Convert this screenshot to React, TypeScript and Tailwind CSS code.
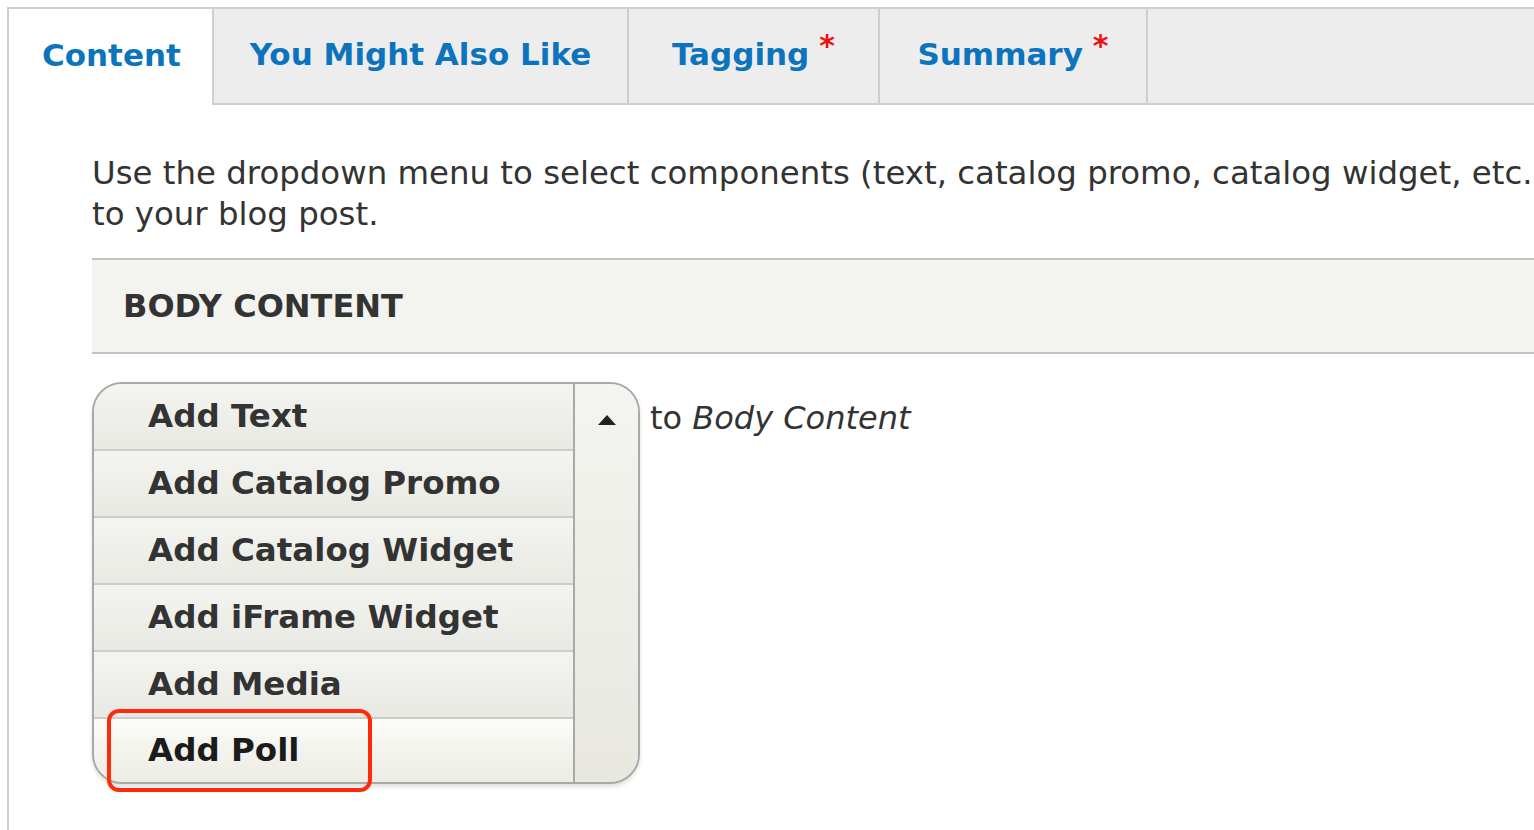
import React from 'react';

const tabs = [
  { label: 'You Might Also Like', w: 'w-[415px]', req: false },
  { label: 'Tagging', w: 'w-[251px]', req: true },
  { label: 'Summary', w: 'w-[268px]', req: true },
];

const items = ['Add Text', 'Add Catalog Promo', 'Add Catalog Widget', 'Add iFrame Widget', 'Add Media'];

const App = () => {
  return (
    <div className="h-[830px] overflow-hidden bg-white pl-[7px] pt-[7px] font-['DejaVu_Sans',sans-serif]">
      <div className="h-full border-l-2 border-t-2 border-[#cfcfcf]">
        {/* tabs */}
        <div className="flex h-[96px]">
          <div className="flex w-[203px] shrink-0 items-center bg-white pl-[33px] pb-[4px]">
            <span className="text-[31px] font-bold text-[#0b74bd]">Content</span>
          </div>
          {tabs.map((t) => (
            <div
              key={t.label}
              className={`flex ${t.w} shrink-0 items-center justify-center border-b-2 border-l-2 border-[#cfcfcf] bg-[#ededed] pb-[4px]`}
            >
              <span className="text-[31px] font-bold text-[#0b74bd]">{t.label}</span>
              {t.req && <span className="ml-[10px] -mt-[18px] text-[30px] font-bold text-[#ee1111]">*</span>}
            </div>
          ))}
          <div className="flex-1 border-b-2 border-l-2 border-[#cfcfcf] bg-[#ededed]" />
        </div>

        <div className="pl-[83px] pt-[48px]">
          <p className="whitespace-nowrap text-[32.4px] leading-[41px] text-[#333]">
            Use the dropdown menu to select components (text, catalog promo, catalog widget, etc.)
            <br />
            to your blog post.
          </p>

          <div className="mt-[23px] flex h-[96px] items-center border-y-2 border-[#c4c4bf] bg-[#f3f3ef] pl-[31px]">
            <span className="text-[32px] font-bold text-[#333]">BODY CONTENT</span>
          </div>

          <div className="mt-[28px] flex items-start">
            <div className="relative flex h-[402px] w-[548px] shrink-0 overflow-hidden rounded-[30px] border-2 border-[#a9a9a9] bg-[#efefea] shadow-[0_3px_4px_rgba(0,0,0,0.12)]">
              <div className="flex w-[479px] shrink-0 flex-col">
                {items.map((it) => (
                  <div
                    key={it}
                    className="flex h-[67px] items-center border-b-2 border-[#cdcdc8] bg-gradient-to-b from-[#f4f4f0] to-[#e9e9e4] pl-[54px]"
                  >
                    <span className="text-[32.5px] font-semibold text-[#333]">{it}</span>
                  </div>
                ))}
                <div className="flex flex-1 items-center bg-gradient-to-b from-[#fbfbf8] to-[#ececE4] pl-[54px]">
                  <span className="text-[32.5px] font-semibold text-[#1b1b1b]">Add Poll</span>
                </div>
              </div>
              <div className="flex flex-1 justify-center border-l-2 border-[#a9a9a9] bg-gradient-to-b from-[#f4f4f0] to-[#e8e8e1] pt-[31px]">
                <svg width="18" height="10" viewBox="0 0 18 10">
                  <path d="M9 0 L18 10 L0 10 Z" fill="#222" />
                </svg>
              </div>
            </div>
            <div className="ml-[10px] mt-[12px] text-[32px] text-[#333]">
              to <em>Body Content</em>
            </div>
          </div>
        </div>
      </div>
      {/* annotation */}
      <div className="pointer-events-none absolute left-[107px] top-[709px] h-[83px] w-[265px] rounded-[12px] border-4 border-[#ff2a0a]" />
    </div>
  );
};

export default App;
